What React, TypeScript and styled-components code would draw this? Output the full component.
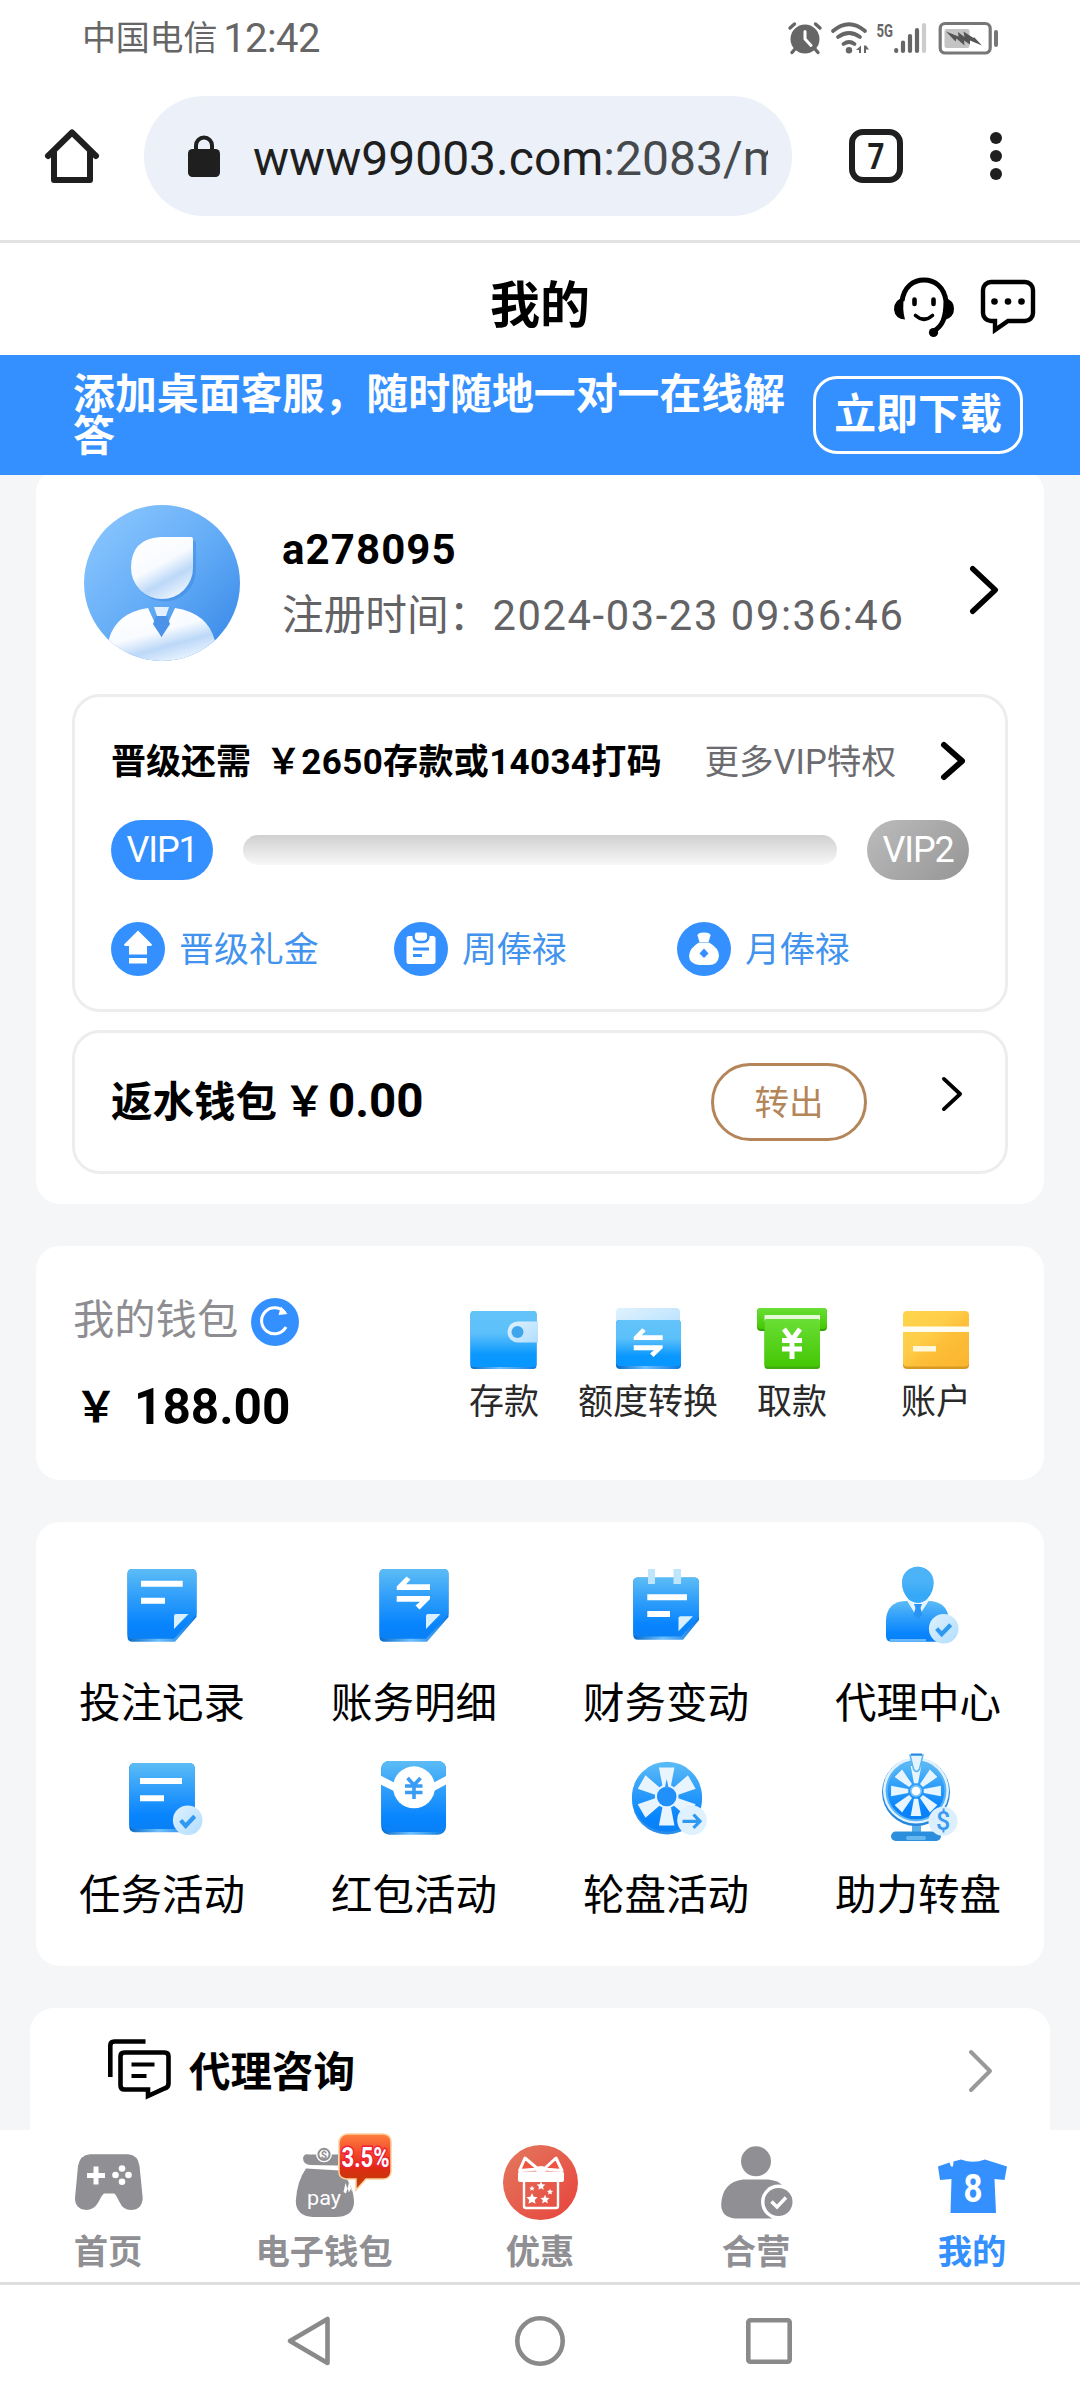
import React from "react";
import styled, { createGlobalStyle } from "styled-components";

const BLUE = "#3590ff";
const GRAY = "#8f8f94";

const GlobalStyle = createGlobalStyle`
  * { box-sizing: border-box; }
  body { margin: 0; background: #fff; }
  svg { display: block; flex: none; overflow: visible; }
  svg text { font-family: Roboto, "Noto Sans", sans-serif; }
`;

const Screen = styled.div`
  width: 1080px;
  height: 2400px;
  overflow: hidden;
  display: flex;
  flex-direction: column;
  background: #fff;
  color: #000;
  font-family: Roboto, "Noto Sans CJK SC", sans-serif;
  line-height: 1;
  white-space: nowrap;
`;

/* ---------- system and browser bars ---------- */

const StatusBar = styled.div`
  flex: none;
  height: 76px;
  padding: 0 82px 0 82px;
  display: flex;
  align-items: center;
  color: #666;
`;
const Carrier = styled.span`
  font-size: 34px;
  letter-spacing: -0.2px;
`;
const Clock = styled.span`
  margin-left: 6px;
  font-size: 40px;
  letter-spacing: -0.6px;
  padding-top: 1px;
`;
const StatusIcons = styled.div`
  margin-left: auto;
`;

const BrowserBar = styled.div`
  flex: none;
  height: 164px;
  padding: 20px 78px 0 45px;
  display: flex;
  align-items: flex-start;
`;
const BarIcon = styled.div<{ $ml?: number }>`
  height: 120px;
  margin-left: ${(p) => p.$ml ?? 0}px;
  display: flex;
  align-items: center;
`;
const Omnibox = styled.div`
  width: 648px;
  height: 120px;
  margin-left: 45px;
  padding: 0 24px 0 44px;
  border-radius: 60px;
  background: #ebf0f9;
  display: flex;
  align-items: center;
`;
const Url = styled.div`
  margin-left: 33px;
  width: 515px;
  overflow: hidden;
  font-size: 48px;
  line-height: 64px;
  padding-top: 6px;
  color: #1f1f1f;
  span { color: #474a4d; }
`;

const Header = styled.header`
  flex: none;
  height: 115px;
  border-top: 3px solid #e1e3e0;
  padding: 0 45px 0 186px;
  display: grid;
  grid-template-columns: 1fr auto;
  align-items: center;
`;
const Title = styled.h1`
  margin: 0;
  text-align: center;
  font-size: 50px;
  font-weight: 700;
  padding-top: 14px;
`;
const HeaderIcons = styled.div`
  display: flex;
  align-items: center;
  gap: 27px;
  padding-top: 15px;
`;

const Banner = styled.div`
  flex: none;
  height: 120px;
  padding: 0 57px 0 73px;
  background: ${BLUE};
  color: #fff;
  display: flex;
  align-items: flex-start;
  justify-content: space-between;
  font-weight: 700;
  font-size: 41.9px;
`;
const BannerText = styled.div`
  width: 722px;
  padding-top: 19px;
  line-height: 41.6px;
  white-space: normal;
`;
const BannerButton = styled.button`
  width: 210px;
  height: 78px;
  margin-top: 21px;
  border: 3px solid #fff;
  border-radius: 24px;
  background: none;
  color: #fff;
  font: inherit;
  padding: 0;
`;

/* ---------- page ---------- */

const Page = styled.main`
  flex: none;
  height: 1655px;
  overflow: hidden;
  background: #f4f6f8;
  display: flex;
  flex-direction: column;
  align-items: center;
`;
const Card = styled.section<{ $h: number; $mt?: number; $w?: number }>`
  flex: none;
  width: ${(p) => p.$w ?? 1008}px;
  height: ${(p) => p.$h}px;
  margin-top: ${(p) => p.$mt ?? 42}px;
  border-radius: 24px;
  background: #fff;
`;
const ProfileCard = styled(Card)`
  padding: 36px 36px 0;
`;
const Profile = styled.div`
  height: 156px;
  padding: 0 10px 0 12px;
  display: flex;
`;
const ProfileInfo = styled.div`
  margin-left: 42px;
  padding-top: 24px;
  flex: 1;
`;
const UserName = styled.div`
  font-size: 42px;
  font-weight: 700;
  letter-spacing: 1.1px;
`;
const Registered = styled.div`
  margin-top: 24px;
  font-size: 41.7px;
  color: #636366;
`;
const RegDate = styled.span`
  margin-left: 2px;
  letter-spacing: 1.6px;
`;
const ProfileArrow = styled.div`
  padding-top: 61px;
`;

const Panel = styled.div<{ $h: number; $mt: number }>`
  height: ${(p) => p.$h}px;
  margin-top: ${(p) => p.$mt}px;
  border: 3px solid #ededee;
  border-radius: 28px;
  padding: 0 36px;
`;
const VipTop = styled.div`
  height: 55px;
  margin-top: 36px;
  padding-right: 4px;
  display: flex;
  align-items: center;
  font-size: 35px;
  & > b, & > span { padding-top: 4px; }
`;
const VipNeed = styled.b`
  letter-spacing: 0;
`;
const VipAmount = styled.b`
  margin-left: 15px;
  letter-spacing: 0.35px;
`;
const VipMore = styled.span`
  margin-left: auto;
  margin-right: 45px;
  font-size: 34.6px;
  color: #6c6c70;
`;
const VipTrack = styled.div`
  margin-top: 32px;
  display: flex;
  align-items: center;
  justify-content: space-between;
`;
const VipPill = styled.span<{ $next?: boolean }>`
  width: 102px;
  height: 60px;
  border-radius: 30px;
  display: flex;
  align-items: center;
  justify-content: center;
  font-size: 36px;
  letter-spacing: -1.2px;
  color: #fff;
  background: ${(p) => (p.$next ? "linear-gradient(135deg, #bcbcbc, #959595)" : BLUE)};
`;
const VipBar = styled.span`
  width: 594px;
  height: 30px;
  border-radius: 15px;
  background: linear-gradient(#d0d0d0, #f8f8f8);
`;
const Perks = styled.div`
  margin-top: 42px;
  display: grid;
  grid-template-columns: repeat(3, 283px);
`;
const Perk = styled.div`
  height: 54px;
  display: flex;
  align-items: center;
  gap: 14px;
  font-size: 34.9px;
  color: #4293ee;
`;
const PerkLabel = styled.span`
  padding-top: 4px;
`;
const RebateRow = styled.div`
  height: 138px;
  padding-right: 7px;
  display: flex;
  align-items: center;
  font-weight: 700;
  font-size: 41.5px;
`;
const RebateLabel = styled.span`
  padding-top: 2px;
`;
const RebateAmount = styled.span`
  margin-left: 7px;
  font-size: 47.5px;
  display: flex;
  align-items: center;
`;
const RebateYen = styled.span`
  width: 44px;
  font-size: 41px;
`;
const OutlineButton = styled.button`
  width: 156px;
  height: 78px;
  margin-left: auto;
  padding: 0 0 4px;
  border: 3px solid #b5855a;
  border-radius: 39px;
  background: none;
  color: #b5855a;
  font: 400 34.6px Roboto, "Noto Sans CJK SC", sans-serif;
`;
const RebateArrow = styled.div`
  margin-left: 75px;
  padding-bottom: 16px;
`;

const WalletCard = styled(Card)`
  display: flex;
  padding: 0 36px 0 37px;
`;
const Balance = styled.div`
  width: 359px;
  padding-top: 50px;
`;
const BalanceLabel = styled.div`
  height: 52px;
  display: flex;
  align-items: center;
  gap: 13px;
  font-size: 41.3px;
  color: #8e8e92;
`;
const BalanceName = styled.span`
  padding-bottom: 3px;
`;
const BalanceValue = styled.div`
  margin-top: 35px;
  font-size: 49.5px;
  font-weight: 700;
  display: flex;
  align-items: center;
`;
const Yen = styled.span`
  padding-left: 2px;
  font-size: 42px;
  width: 61px;
`;
const Actions = styled.div`
  flex: 1;
  display: grid;
  grid-template-columns: repeat(4, 144px);
  padding-top: 61px;
`;
const Action = styled.div`
  display: flex;
  flex-direction: column;
  align-items: center;
  gap: 9px;
  font-size: 35px;
  line-height: 46px;
  color: #2a2a2a;
`;

const MenuCard = styled(Card)`
  display: grid;
  grid-template-columns: repeat(4, 252px);
  grid-auto-rows: 192px;
  padding-top: 38px;
`;
const MenuItem = styled.div`
  display: flex;
  flex-direction: column;
  align-items: center;
  gap: 22px;
  font-size: 41.5px;
  line-height: 52px;
`;

const ConsultCard = styled(Card)`
  display: flex;
  align-items: flex-start;
  padding: 31px 58px 0 78px;
  font-size: 41.5px;
  font-weight: 700;
`;
const ConsultText = styled.span`
  margin-left: 18px;
  line-height: 68px;
`;
const ConsultArrow = styled.div`
  margin-left: auto;
  padding-top: 11px;
`;

const TabBar = styled.nav`
  flex: none;
  height: 155px;
  border-bottom: 3px solid #dedede;
  display: grid;
  grid-template-columns: repeat(5, 216px);
`;
const Tab = styled.div<{ $active?: boolean }>`
  display: flex;
  flex-direction: column;
  align-items: center;
  padding-top: 10px;
  gap: 7px;
  font-size: 34.3px;
  line-height: 46px;
  font-weight: 700;
  color: ${(p) => (p.$active ? BLUE : GRAY)};
`;
const SystemNav = styled.div`
  flex: 1;
  padding: 0 288px 3px;
  display: flex;
  align-items: center;
  justify-content: space-between;
`;

/* ---------- icons ---------- */

const Gradients = () => (
  <defs>
    <linearGradient id="sky" x1="0" y1="0" x2="0" y2="1">
      <stop offset="0" stopColor="#5cbcf5" /><stop offset=".35" stopColor="#35a2fa" /><stop offset=".8" stopColor="#0784fe" /><stop offset="1" stopColor="#0a80f5" />
    </linearGradient>
    <linearGradient id="wal" x1="0" y1="0" x2="0" y2="1">
      <stop offset="0" stopColor="#62c3f8" /><stop offset=".4" stopColor="#5cc0fa" /><stop offset=".78" stopColor="#0a98fe" /><stop offset="1" stopColor="#0797ff" />
    </linearGradient>
    <linearGradient id="pale" x1="0" y1="0" x2="1" y2="1">
      <stop offset="0" stopColor="#dff2fe" /><stop offset="1" stopColor="#b0ddfe" />
    </linearGradient>
    <linearGradient id="edge" x1="0" y1="0" x2="1" y2="0">
      <stop offset="0" stopColor="#0569c8" /><stop offset=".45" stopColor="#6fc0fd" /><stop offset="1" stopColor="#0a78e0" />
    </linearGradient>
    <linearGradient id="green" x1="0" y1="0" x2="0" y2="1">
      <stop offset="0" stopColor="#6ade35" /><stop offset="1" stopColor="#44c704" />
    </linearGradient>
    <linearGradient id="gold" x1="0" y1="0" x2="1" y2="1">
      <stop offset="0" stopColor="#ffd54c" /><stop offset=".4" stopColor="#ffcd48" /><stop offset=".6" stopColor="#fdbe38" /><stop offset="1" stopColor="#fbb52e" />
    </linearGradient>
    <linearGradient id="face" x1="0" y1="0" x2="1" y2="1">
      <stop offset="0" stopColor="#90caff" /><stop offset=".5" stopColor="#65adf7" /><stop offset="1" stopColor="#3284e6" />
    </linearGradient>
    <linearGradient id="head" x1=".2" y1="0" x2=".75" y2="1">
      <stop offset="0" stopColor="#fff" /><stop offset=".45" stopColor="#f8fbff" /><stop offset=".7" stopColor="#bcd8f8" /><stop offset="1" stopColor="#f2f8ff" />
    </linearGradient>
    <linearGradient id="red" x1="0" y1="0" x2="1" y2="1">
      <stop offset="0" stopColor="#e3795f" /><stop offset="1" stopColor="#e8433c" />
    </linearGradient>
    <linearGradient id="bub" x1="0" y1="0" x2="0" y2="1">
      <stop offset="0" stopColor="#ff8040" /><stop offset=".3" stopColor="#f4502c" /><stop offset=".6" stopColor="#dd2a10" /><stop offset="1" stopColor="#b94408" />
    </linearGradient>
  </defs>
);

const Chevron = ({ w, h, sw, color = "#000" }: { w: number; h: number; sw: number; color?: string }) => (
  <svg width={w} height={h} viewBox={`0 0 ${w} ${h}`} fill="none" stroke={color} strokeWidth={sw} strokeLinecap="round" strokeLinejoin="round">
    <path d={`M${sw / 2} ${sw / 2}L${w - sw / 2} ${h / 2}L${sw / 2} ${h - sw / 2}`} />
  </svg>
);

const StatusGlyphs = () => (
  <svg width="210" height="32" viewBox="788 20 210 32" fill="#666">
    <circle cx="805" cy="37" r="14.5" />
    <path d="M805 29.500V37l6 6.500" stroke="#fff" strokeWidth="3" fill="none" strokeLinecap="round" strokeLinejoin="round" />
    <path d="M790 26l4.500-4M820 26l-4.500-4M795 47l-3 3.500M815 47l3 3.500" stroke="#666" strokeWidth="3.400" strokeLinecap="round" />
    <path d="M833 29q16-13.500 32 0M838 35q11-8 22 0M843.500 42q5.500-4 11 0" stroke="#666" strokeWidth="3.800" fill="none" strokeLinecap="round" />
    <circle cx="849" cy="48.200" r="3.200" />
    <path d="M861 43.500v7.500h-2v-3h-3zM864 51v-7.500h2l3 4h-3v3.500z" />
    <text x="876.500" y="34.500" fontSize="18.500" fontWeight="700" textLength="16.500" lengthAdjust="spacingAndGlyphs">5G</text>
    <path d="M896.200 49v-1M903 49v-8.500M910 49v-15M917 49v-21" stroke="#666" strokeWidth="4.200" strokeLinecap="round" />
    <path d="M924 49v-26" stroke="#ccc" strokeWidth="4.200" strokeLinecap="round" />
    <rect x="940.200" y="21.500" width="50" height="29.500" rx="5" fill="none" stroke="#777" strokeWidth="3.200" />
    <rect x="944.500" y="27" width="25" height="19" rx="2" fill="#c4c4c4" />
    <path d="M946 29.500l12.500 5-.5-4.500 6.500 5-1-5.500 10 6.500.5-1 8 8.500-12-5 0 4-6-4 .5 5-8-7-1 3z" fill="#555" />
    <path d="M996 30v13" stroke="#777" strokeWidth="4" strokeLinecap="round" />
  </svg>
);

const HomeIcon = () => (
  <svg width="54" height="54" viewBox="45 129 54 54" fill="none" stroke="#1f1f1f" strokeWidth="6" strokeLinecap="round" strokeLinejoin="round">
    <path d="M48 156L72 132.500L96 156M54 152v28h36v-28" />
  </svg>
);
const LockIcon = () => (
  <svg width="32" height="42" viewBox="0 0 32 42">
    <path d="M8 16V10.500a8 8 0 0 1 16 0V16" fill="none" stroke="#1f1f1f" strokeWidth="4" />
    <rect y="14" width="32" height="28" rx="4.500" fill="#1f1f1f" />
  </svg>
);
const TabsIcon = () => (
  <svg width="54" height="54" viewBox="0 0 54 54">
    <rect x="3" y="3" width="48" height="48" rx="11" fill="none" stroke="#1f1f1f" strokeWidth="6" />
    <text x="27" y="40" fontSize="36" fontWeight="700" textAnchor="middle" fill="#1f1f1f" textLength="17" lengthAdjust="spacingAndGlyphs">7</text>
  </svg>
);
const DotsIcon = () => (
  <svg width="12" height="48" viewBox="0 0 12 48" fill="#1f1f1f">
    <circle cx="6" cy="6" r="6" /><circle cx="6" cy="24" r="6" /><circle cx="6" cy="42" r="6" />
  </svg>
);
const HeadsetIcon = () => (
  <svg width="60" height="60" viewBox="0 0 60 60">
    <path d="M8 24C10 10 19 3 30 3S50 10 52 24C52 42 48 49 40 54" fill="none" stroke="#000" strokeWidth="5" />
    <path d="M10 21Q0 22 0 32.500Q1 42 11 42.500Q8 32 10 21ZM51 21Q60 23 60 32Q60 40 51 43Q53 32 51 21Z" />
    <path d="M20.500 22.500v4.500M39.500 22.500v4.500" stroke="#000" strokeWidth="4.600" strokeLinecap="round" />
    <path d="M21.500 38.500Q30 46 38.500 38.500" fill="none" stroke="#000" strokeWidth="3.600" strokeLinecap="round" />
    <circle cx="39.500" cy="55.500" r="4.600" />
  </svg>
);
const ChatIcon = () => (
  <svg width="54" height="54" viewBox="0 0 54 54">
    <path d="M10 2h34a8 8 0 0 1 8 8v23a8 8 0 0 1-8 8H27L14 50V41H10a8 8 0 0 1-8-8V10a8 8 0 0 1 8-8z" fill="none" stroke="#000" strokeWidth="4.400" />
    <circle cx="13.500" cy="21.500" r="3.300" /><circle cx="27" cy="21.500" r="3.300" /><circle cx="40.500" cy="21.500" r="3.300" />
  </svg>
);
const Avatar = () => (
  <svg width="156" height="156" viewBox="0 0 156 156">
    <Gradients />
    <clipPath id="round"><circle cx="78" cy="78" r="78" /></clipPath>
    <circle cx="78" cy="78" r="78" fill="url(#face)" />
    <g clipPath="url(#round)">
      <path d="M25 156V134Q32 108 64 103L77.500 132L91 103Q124 108 131 136V156Z" fill="url(#head)" />
      <path d="M70 102h15l-3 9h-9z" fill="#e4f0fe" />
      <path d="M72 111h11l3 8-8.500 13-8.500-13z" fill="#4b92e8" />
    </g>
    <path d="M78 33.500h29q3 0 3 3V63A31.500 31.500 0 1 1 47 63Q47 36 78 32z" fill="#2f78d8" opacity=".35" transform="translate(2 2)" />
    <path d="M76 32h31q2 0 2 2V63A31 31 0 1 1 47 63Q47 34 76 32z" fill="url(#head)" />
  </svg>
);

const PerkUp = () => (
  <svg width="54" height="54" viewBox="0 0 54 54">
    <circle cx="27" cy="27" r="27" fill={BLUE} />
    <path d="M27 8.500L41 22.500Q41 24 39 24H36V32.500H18V24H15Q13 24 13 22.500ZM18 36h18v5.500H18z" fill="#fff" />
  </svg>
);
const PerkWeek = () => (
  <svg width="54" height="54" viewBox="0 0 54 54">
    <circle cx="27" cy="27" r="27" fill={BLUE} />
    <rect x="12.500" y="14" width="29" height="28" rx="2.500" fill="#fff" />
    <path d="M19.500 13Q19.500 20 25 20h4Q34.500 20 34.500 13" fill="#fff" stroke={BLUE} strokeWidth="2.500" />
    <rect x="21" y="10.500" width="12" height="7" rx="2" fill="#fff" />
    <path d="M19 27h16M19 33.500h9" stroke={BLUE} strokeWidth="2.800" />
  </svg>
);
const PerkMonth = () => (
  <svg width="54" height="54" viewBox="0 0 54 54">
    <circle cx="27" cy="27" r="27" fill={BLUE} />
    <path d="M22 20.500h10Q42 26 42 34Q41 43 32 43H22Q12.500 42 12 34Q12.500 26 22 20.500Z" fill="#fff" />
    <path d="M20.500 13.500q0-3 6.500-3t6.500 3l-2 6.500h-9z" fill="#fff" />
    <path d="M27 26.500l4.500 5-4.500 4.500-4.500-4.500z" fill={BLUE} />
  </svg>
);
const RefreshIcon = () => (
  <svg width="48" height="48" viewBox="0 0 48 48">
    <circle cx="24" cy="24" r="24" fill={BLUE} />
    <path d="M34 15A13 13 0 1 0 35 29" fill="none" stroke="#fff" strokeWidth="3" />
    <path d="M30 8.500L36.500 16L27.500 17z" fill="#fff" />
  </svg>
);

const DepositIcon = () => (
  <svg width="70" height="64" viewBox="0 0 70 64">
    <rect x="1.500" y="4" width="66" height="58" rx="3.500" fill="url(#edge)" />
    <rect x="1.500" y="4" width="66" height="56" rx="3" fill="url(#wal)" />
    <path d="M69 14.500H49a10.500 10.500 0 0 0 0 21H69z" fill="url(#pale)" />
    <circle cx="48.500" cy="25" r="6" fill="#3fa6ee" />
  </svg>
);
const Swap = () => (
  <>
    <path d="M30.700 30H64V24.300H40L44.500 19.500L40.500 16.500L30.700 26.500Z" />
    <path d="M64 36H30.700V41.700H54L49.500 45.500L53.500 49.500L64 39Z" />
  </>
);
const TransferIcon = () => (
  <svg width="70" height="64" viewBox="0 0 70 64">
    <rect x="3" y="1" width="64" height="30" rx="4" fill="url(#pale)" />
    <rect x="3" y="13" width="65" height="49" rx="4" fill="url(#edge)" />
    <rect x="3" y="13" width="65" height="46" rx="3.500" fill="url(#wal)" />
    <g fill="#fff" transform="translate(-6 7) scale(.87)"><Swap /></g>
  </svg>
);
const WithdrawIcon = () => (
  <svg width="70" height="64" viewBox="0 0 70 64">
    <rect x="0" y="1" width="70" height="23" rx="4" fill="#35a208" />
    <rect x="0" y="1" width="70" height="21" rx="4" fill="url(#green)" />
    <rect x="7.500" y="8" width="55.500" height="7" fill="#e4fad9" />
    <rect x="7.500" y="12" width="55.500" height="50" rx="3" fill="#3fae0c" />
    <rect x="7.500" y="12" width="55.500" height="47.500" rx="3" fill="url(#green)" />
    <path d="M27 22l8 11 8-11M25 33.500h20M25 42h20M35 33v19" stroke="#fff" strokeWidth="5" fill="none" />
  </svg>
);
const AccountIcon = () => (
  <svg width="70" height="64" viewBox="0 0 70 64">
    <rect x="2" y="6" width="66" height="56" rx="4" fill="#d99a22" />
    <rect x="2" y="4" width="66" height="55.500" rx="4" fill="url(#gold)" />
    <rect x="2" y="19.500" width="66" height="5.500" fill="#fffdf2" />
    <rect x="12" y="39" width="23" height="5.500" fill="#fff8dd" />
  </svg>
);

const Fold = ({ x, y }: { x: number; y: number }) => (
  <path d={`M${x} ${y + 15}V${y + 2}Q${x} ${y} ${x + 2} ${y}H${x + 14.5}Z`} fill="#d8effe" />
);
const Sheet = () => (
  <>
    <path d="M18.500 9H77.500Q82.500 9 82.500 14V57L61 81.700H18.500Q13.500 81.700 13.500 76.700V14Q13.500 9 18.500 9Z" fill="url(#edge)" />
    <path d="M18.500 9H77.500Q82.500 9 82.500 14V54L60 78.700H18.500Q13.500 78.700 13.500 74V14Q13.500 9 18.500 9Z" fill="url(#sky)" />
    <Fold x={60} y={54} />
  </>
);
const Check = ({ cx, cy }: { cx: number; cy: number }) => (
  <>
    <circle cx={cx} cy={cy} r="14.800" fill="url(#pale)" />
    <path d={`M${cx - 7} ${cy}l5 5.500l9-9.500`} fill="none" stroke="#2f98f0" strokeWidth="4.200" />
  </>
);
const MenuSvg = ({ children }: { children: React.ReactNode }) => (
  <svg width="96" height="96" viewBox="0 0 96 96">{children}</svg>
);
const BetsIcon = () => (
  <MenuSvg><Sheet /><path d="M27 20.700h41.700v6H27zM27 37.700h24v6H27z" fill="#fff" /></MenuSvg>
);
const LedgerIcon = () => (
  <MenuSvg><Sheet /><g fill="#fff"><Swap /></g></MenuSvg>
);
const FinanceIcon = () => (
  <MenuSvg>
    <path d="M20 17.500H76Q81 17.500 81 22.500V60L65 79.700H20Q15.300 79.700 15.300 75V22Q15.300 17.500 20 17.500Z" fill="url(#edge)" />
    <path d="M20 17.500H76Q81 17.500 81 22.500V57L63 76.500H20Q15.300 76.500 15.300 72V22Q15.300 17.500 20 17.500Z" fill="url(#sky)" />
    <path d="M30 9h7v15h-7zM55.500 9h7.500v15h-7.500z" fill="#bfe5fd" />
    <path d="M29.300 34.300H69v6H29.300zM29.300 51H52v6H29.300z" fill="#fff" />
    <Fold x={60.5} y={56.3} />
  </MenuSvg>
);
const AgentIcon = () => (
  <MenuSvg>
    <path d="M16 60Q17 42 35 41H61Q78 43 79 60V81.700H21Q16 81.700 16 76Z" fill="url(#sky)" />
    <path d="M20 79h36v2.500H20z" fill="#8fd0fd" opacity=".7" />
    <path d="M36 39L47.500 58L60 39Z" fill="#e6f5ff" />
    <path d="M44 44h8l-1.500 4 2 7-4.500 4-4.500-4 2-7z" fill="#2a94f5" />
    <path d="M32 22.500a15.800 15.800 0 0 1 31.600 0Q63.600 32 57 39Q48 46.500 38.500 39Q32 32 32 22.500Z" fill="url(#wal)" />
    <path d="M32 22.500a15.800 15.800 0 0 1 31.600 0Q63.600 32 57 39Q48 46.500 38.500 39Q32 32 32 22.500Z" fill="#45adf5" opacity=".75" />
    <Check cx={73.7} cy={68.7} />
  </MenuSvg>
);
const TaskIcon = () => (
  <MenuSvg>
    <rect x="15.300" y="11" width="65.400" height="69.300" rx="5" fill="url(#edge)" />
    <rect x="15.300" y="11" width="65.400" height="66" rx="5" fill="url(#sky)" />
    <path d="M26 26h42v6H26zM26 43.300h24v6H26z" fill="#fff" />
    <Check cx={73.7} cy={68.3} />
  </MenuSvg>
);
const PacketIcon = () => (
  <MenuSvg>
    <rect x="15.300" y="9" width="64.700" height="73.700" rx="8" fill="url(#edge)" />
    <rect x="15.300" y="9" width="64.700" height="71" rx="8" fill="url(#sky)" />
    <path d="M14.500 23.500L30 31.500H66L81 23.500V32L66 40H30L14.500 32.500Z" fill="#fff" />
    <circle cx="48" cy="35.300" r="21" fill="#fff" />
    <path d="M41.500 26l6.500 7 6.500-7M39 34h17.500M39 40.500h17.500M48 33v14" fill="none" stroke="#3a9df5" strokeWidth="3.600" />
  </MenuSvg>
);

const polar = (cx: number, cy: number, r: number, deg: number) => {
  const a = (deg * Math.PI) / 180;
  return `${(cx + r * Math.cos(a)).toFixed(2)} ${(cy + r * Math.sin(a)).toFixed(2)}`;
};
const spokes = (n: number, cx: number, cy: number, r0: number, r1: number, half0: number, half1: number) =>
  Array.from({ length: n }, (_, i) => {
    const a = -90 + (360 / n) * i;
    return `M${polar(cx, cy, r0, a - half0)}L${polar(cx, cy, r1, a - half1)}L${polar(cx, cy, r1, a + half1)}L${polar(cx, cy, r0, a + half0)}Z`;
  }).join("");

const RouletteIcon = () => (
  <MenuSvg>
    <circle cx="49" cy="47.500" r="35" fill="#2a8fec" />
    <circle cx="49" cy="44.700" r="35" fill="url(#sky)" />
    <path d={spokes(6, 48.7, 44.5, 11, 30, 22, 15)} fill="#e8f5ff" />
    <circle cx="48.700" cy="44.500" r="10.800" fill="#2190fb" stroke="#e8f5ff" strokeWidth="2" />
    <path d="M48.700 27l2 9h-4z" fill="#3a9df8" />
    <circle cx="74" cy="68.300" r="14.800" fill="#dff1fe" />
    <path d="M64.500 69.300h17M75.500 62.500l6.500 6.800-6.500 6.500" fill="none" stroke="#2f98f0" strokeWidth="3.200" />
  </MenuSvg>
);
const BoostWheelIcon = () => (
  <MenuSvg>
    <path d="M42 72h9v10h-9z" fill="#58aeea" />
    <rect x="21" y="79.500" width="50" height="9.500" rx="4.700" fill="#2b8fdd" />
    <rect x="36" y="84" width="20" height="4" rx="2" fill="#8fd4fa" opacity=".6" />
    <circle cx="46" cy="40" r="34" fill="#2688dd" />
    <circle cx="46" cy="38.500" r="33" fill="#e3f4ff" />
    <circle cx="46" cy="38.800" r="30.500" fill="#5bb4f3" />
    <circle cx="46" cy="38.800" r="28.500" fill="url(#sky)" />
    <path d={spokes(8, 46, 39, 8, 25.5, 15, 12)} fill="#e6f5ff" />
    <circle cx="46" cy="39" r="6" fill="#7cc4f8" />
    <circle cx="46" cy="39" r="4.300" fill="#fff" />
    <path d="M40 3h13l-3.500 14q-3 5-6 0z" fill="#e3f4ff" stroke="#5db5f2" strokeWidth="1.500" />
    <path d="M41 2.500h11" stroke="#2688dd" strokeWidth="2" />
    <circle cx="73" cy="69.300" r="14.500" fill="#dceffd" />
    <text x="73" y="78" fontSize="25" fontWeight="500" textAnchor="middle" fill="#3a9bf0">$</text>
  </MenuSvg>
);

const ConsultIcon = () => (
  <svg width="63" height="62" viewBox="0 0 63 62" fill="none" stroke="#000" strokeWidth="4.600">
    <path d="M2.300 38V6.500q0-4 4-4H37.500" />
    <path d="M16.500 13.500H56.500q4 0 4 4V44.500q0 4-4 5L40 57V50.500H16.500q-4 0-4-4V17.500q0-4 4-4z" />
    <path d="M23.500 25.500H46.500M23.500 37H38.500" strokeWidth="4.200" />
  </svg>
);

const GameIcon = () => (
  <svg width="90" height="82" viewBox="63 2140 90 82">
    <path d="M90 2154.300H128Q138 2155 139.500 2166L142.700 2198Q142 2210 131 2210Q123 2210 119.500 2202Q115.500 2193.500 114 2193.500H104.500Q102.500 2193.500 98.500 2202Q94 2210 86 2210Q75 2209 75 2198L78 2166Q80 2155 90 2154.300Z" fill={GRAY} />
    <path d="M87 2175.500h18M96 2166.500v18" stroke="#fff" strokeWidth="5" />
    <g fill="#fff"><circle cx="122" cy="2168.500" r="3.300" /><circle cx="122" cy="2181.800" r="3.300" /><circle cx="115.500" cy="2175" r="3.300" /><circle cx="128.500" cy="2175" r="3.300" /></g>
  </svg>
);
const BagIcon = () => (
  <svg width="90" height="82" viewBox="279 2140 90 82">
    <path d="M306 2168.500L340 2170.500Q354 2185 354 2203Q353 2217 335 2217H313Q296 2216 295.800 2201Q297 2181 306 2168.500Z" fill={GRAY} />
    <path d="M309 2154.500H338V2165.500L310 2165Q303 2164 303 2158Q304 2153 309 2154.500Z" fill={GRAY} />
    <circle cx="324" cy="2154.300" r="8" fill="#fff" />
    <circle cx="324" cy="2154.300" r="5.600" fill="#fff" stroke={GRAY} strokeWidth="2" />
    <text x="324" y="2158.500" fontSize="11" fontWeight="700" textAnchor="middle" fill={GRAY}>$</text>
    <text x="324" y="2205" fontSize="20.500" fontWeight="400" textAnchor="middle" fill="#fff" textLength="34" lengthAdjust="spacingAndGlyphs">pay</text>
    <path d="M343.500 2192l2-9 2 6 1.500-7 3.500 10-2-3-1.500 3.500-1.500-4-1.500 5z" fill="#fff" />
    <path d="M347 2134H384Q391 2135 391 2142V2172Q390 2179 383 2179H366L356 2190V2179H346Q339 2178 339 2172V2142Q340 2135 347 2134Z" fill="url(#bub)" stroke="#ffcf9c" strokeWidth="1.500" />
    <text x="365.500" y="2167" fontSize="27" fontWeight="700" textAnchor="middle" fill="#fff" stroke="#f0203a" strokeWidth="3" paintOrder="stroke" textLength="48" lengthAdjust="spacingAndGlyphs">3.5%</text>
  </svg>
);
const star = (cx: number, cy: number, r: number) =>
  "M" + Array.from({ length: 10 }, (_, i) => polar(cx, cy, i % 2 ? r * 0.48 : r, -90 + i * 36)).join("L") + "Z";
const GiftIcon = () => (
  <svg width="90" height="82" viewBox="495 2140 90 82">
    <circle cx="540.500" cy="2182.500" r="37.500" fill="url(#red)" />
    <path d="M538 2169L525 2158L519.500 2170.500ZM544 2169L556 2158L562 2170.500Z" fill="#ee5440" stroke="#fff" strokeWidth="3" strokeLinejoin="round" />
    <ellipse cx="541" cy="2169.500" rx="5.500" ry="3.500" fill="#fff" />
    <rect x="518" y="2171.500" width="46" height="10.500" rx="2" fill="#fff" />
    <path d="M524 2182v24q0 2 2 2h30q2 0 2-2v-24" fill="none" stroke="#fff" strokeWidth="2.400" />
    <path d={star(532, 2199, 6) + star(545, 2199.5, 4.8) + star(541, 2186, 4.5) + star(532, 2188.5, 2.8) + star(550, 2192, 3.2)} fill="#fff" />
  </svg>
);
const PartnerIcon = () => (
  <svg width="90" height="82" viewBox="711 2140 90 82">
    <circle cx="756" cy="2161.300" r="15" fill={GRAY} />
    <path d="M743 2179.500H768Q786 2181 790 2200L772 2218.500H735Q721.500 2217 721.200 2205Q722 2182 743 2179.500Z" fill={GRAY} />
    <circle cx="778.500" cy="2202" r="17.500" fill="#fff" />
    <circle cx="778.500" cy="2202" r="14" fill={GRAY} />
    <path d="M771.500 2201.500l5.500 5.500 9-9.500" fill="none" stroke="#fff" strokeWidth="3.400" />
  </svg>
);
const ShirtIcon = () => (
  <svg width="90" height="82" viewBox="927 2140 90 82">
    <path d="M961 2159.500Q973 2164 985 2159.500L1007 2166.500L1004.500 2180L994.500 2179L996 2213H950.500L951.500 2179L940 2180L938 2166.500L949.500 2162.500L951 2166.500L953 2166.500L953.500 2161.500Z" fill={BLUE} />
    <text x="973" y="2202" fontSize="38" fontWeight="700" textAnchor="middle" fill="#fff" textLength="19" lengthAdjust="spacingAndGlyphs">8</text>
  </svg>
);

/* ---------- data ---------- */

const perks = [
  { label: "晋级礼金", Icon: PerkUp },
  { label: "周俸禄", Icon: PerkWeek },
  { label: "月俸禄", Icon: PerkMonth },
];
const actions = [
  { label: "存款", Icon: DepositIcon },
  { label: "额度转换", Icon: TransferIcon },
  { label: "取款", Icon: WithdrawIcon },
  { label: "账户", Icon: AccountIcon },
];
const menu = [
  { label: "投注记录", Icon: BetsIcon },
  { label: "账务明细", Icon: LedgerIcon },
  { label: "财务变动", Icon: FinanceIcon },
  { label: "代理中心", Icon: AgentIcon },
  { label: "任务活动", Icon: TaskIcon },
  { label: "红包活动", Icon: PacketIcon },
  { label: "轮盘活动", Icon: RouletteIcon },
  { label: "助力转盘", Icon: BoostWheelIcon },
];
const tabs = [
  { label: "首页", Icon: GameIcon },
  { label: "电子钱包", Icon: BagIcon },
  { label: "优惠", Icon: GiftIcon },
  { label: "合营", Icon: PartnerIcon },
  { label: "我的", Icon: ShirtIcon, active: true },
];

export default function App() {
  return (
    <Screen>
      <GlobalStyle />
      <StatusBar>
        <Carrier>中国电信</Carrier>
        <Clock>12:42</Clock>
        <StatusIcons><StatusGlyphs /></StatusIcons>
      </StatusBar>
      <BrowserBar>
        <BarIcon><HomeIcon /></BarIcon>
        <Omnibox>
          <LockIcon />
          <Url>www99003.com<span>:2083/m</span></Url>
        </Omnibox>
        <BarIcon $ml={57}><TabsIcon /></BarIcon>
        <BarIcon $ml={87}><DotsIcon /></BarIcon>
      </BrowserBar>

      <Header>
        <Title>我的</Title>
        <HeaderIcons><HeadsetIcon /><ChatIcon /></HeaderIcons>
      </Header>
      <Banner>
        <BannerText>添加桌面客服，随时随地一对一在线解答</BannerText>
        <BannerButton>立即下载</BannerButton>
      </Banner>

      <Page>
        <ProfileCard $h={735} $mt={-6}>
          <Profile>
            <Avatar />
            <ProfileInfo>
              <UserName>a278095</UserName>
              <Registered>注册时间：<RegDate>2024-03-23 09:36:46</RegDate></Registered>
            </ProfileInfo>
            <ProfileArrow><Chevron w={28} h={48} sw={5.4} /></ProfileArrow>
          </Profile>
          <Panel $h={318} $mt={33}>
            <VipTop>
              <VipNeed>晋级还需</VipNeed>
              <VipAmount>￥2650存款或14034打码</VipAmount>
              <VipMore>更多VIP特权</VipMore>
              <Chevron w={24} h={38} sw={5.8} />
            </VipTop>
            <VipTrack>
              <VipPill>VIP1</VipPill>
              <VipBar />
              <VipPill $next>VIP2</VipPill>
            </VipTrack>
            <Perks>
              {perks.map(({ label, Icon }) => (
                <Perk key={label}><Icon /><PerkLabel>{label}</PerkLabel></Perk>
              ))}
            </Perks>
          </Panel>
          <Panel $h={144} $mt={18}>
            <RebateRow>
              <RebateLabel>返水钱包</RebateLabel>
              <RebateAmount><RebateYen>￥</RebateYen>0.00</RebateAmount>
              <OutlineButton>转出</OutlineButton>
              <RebateArrow><Chevron w={20} h={34} sw={3.8} /></RebateArrow>
            </RebateRow>
          </Panel>
        </ProfileCard>

        <WalletCard $h={234}>
          <Balance>
            <BalanceLabel><BalanceName>我的钱包</BalanceName><RefreshIcon /></BalanceLabel>
            <BalanceValue><Yen>￥</Yen>188.00</BalanceValue>
          </Balance>
          <Actions>
            {actions.map(({ label, Icon }) => (
              <Action key={label}><Icon />{label}</Action>
            ))}
          </Actions>
        </WalletCard>

        <MenuCard $h={444}>
          {menu.map(({ label, Icon }) => (
            <MenuItem key={label}><Icon />{label}</MenuItem>
          ))}
        </MenuCard>

        <ConsultCard $h={160} $w={1020}>
          <ConsultIcon />
          <ConsultText>代理咨询</ConsultText>
          <ConsultArrow><Chevron w={23} h={42} sw={4} color="#999" /></ConsultArrow>
        </ConsultCard>
      </Page>

      <TabBar>
        {tabs.map(({ label, Icon, active }) => (
          <Tab key={label} $active={active}><Icon />{label}</Tab>
        ))}
      </TabBar>
      <SystemNav>
        <svg width="46" height="52" viewBox="0 0 46 52" fill="none" stroke="#8a8a8a" strokeWidth="4.600" strokeLinejoin="round">
          <path d="M39.500 4V48L2 26Z" />
        </svg>
        <svg width="50" height="50" viewBox="0 0 50 50" fill="none" stroke="#8a8a8a" strokeWidth="4.600">
          <circle cx="25" cy="25" r="22.700" />
        </svg>
        <svg width="46" height="46" viewBox="0 0 46 46" fill="none" stroke="#8a8a8a" strokeWidth="4.600">
          <rect x="2.300" y="2.300" width="41.400" height="41.400" rx="2" />
        </svg>
      </SystemNav>
    </Screen>
  );
}
